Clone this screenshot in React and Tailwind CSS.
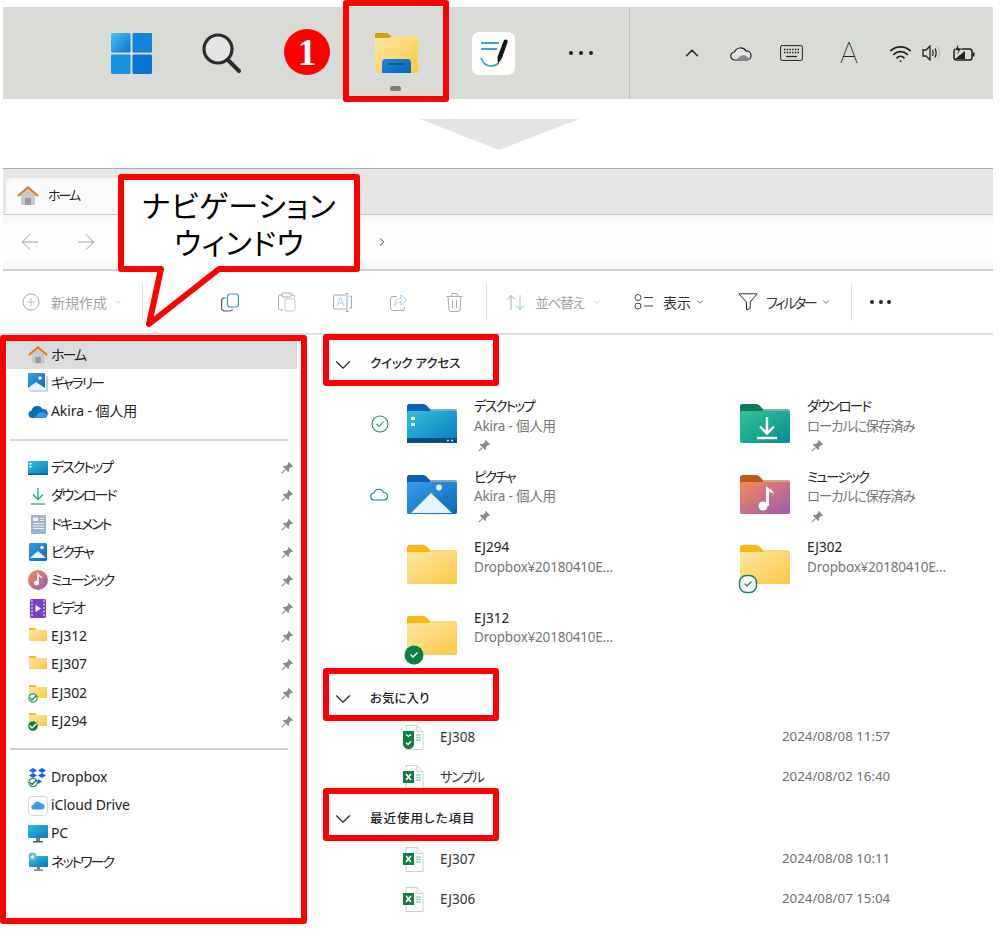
import { ArrowLeft, ArrowRight, ChevronDown, ChevronRight, ChevronUp, Wifi } from 'lucide-react';

const FONT = "font-['Noto_Sans','Noto_Sans_CJK_JP',sans-serif] [font-feature-settings:'palt']";

// katakana is set much tighter in the screenshot than in Noto
const isKana = (s) => /^[゠-ヿ]+$/.test(s);

// ---- shared little drawings ----
function Gradients() {
    const stops = [
        ['yellow', '#fde7a4', '#fcc845'],
        ['teal', '#31c3d8', '#0a78c0'],
        ['sky', '#3a9fe6', '#0a67b8'],
        ['green', '#2fc494', '#0a8c92'],
        ['music', '#f58a5a', '#9a5bb0'],
        ['win', '#4cc2f8', '#0a70cf'],
        ['pocket', '#1b8ae0', '#0b62b4'],
    ];
    return (
        <svg width="0" height="0" className="absolute">
            <defs>
                {stops.map(([id, a, b]) => (
                    <linearGradient key={id} id={id} x1="0" y1="0" x2="1" y2="1">
                        <stop offset="0" stopColor={a} />
                        <stop offset="1" stopColor={b} />
                    </linearGradient>
                ))}
            </defs>
        </svg>
    );
}

function Folder({ fill = 'yellow', tab = '#fbb714', edge, children }) {
    return (
        <svg width="50" height="39" viewBox="0 0 50 39" className="block">
            <path d="M2 0h14c2 0 3 1 4 2l3 3v6H0V2c0-1 1-2 2-2z" fill={tab} />
            <rect x="0" y="5" width="50" height="34" rx="2" fill={edge || tab} opacity={edge ? 1 : 0.55} />
            <rect x="0" y="7" width="50" height="32" rx="2" fill={`url(#${fill})`} />
            {children}
        </svg>
    );
}

function Pin({ className = 'text-[#868b92]' }) {
    return (
        <svg width="13" height="13" viewBox="0 0 13 13" className={className}>
            <path d="M7.6.8l4.6 4.6-1.2.6-.7-.2L8 8l.2 2.2-1 .9L1.900 5.800l.9-1L5 5l2.200-2.300-.2-.7z" fill="currentColor" />
            <path d="M4.300 8.700L.8 12.200" stroke="currentColor" strokeWidth="1.200" />
        </svg>
    );
}

function Check({ className }) {
    return <path d="M-3 0l2 2 4-4" fill="none" strokeWidth="1.400" strokeLinecap="round" strokeLinejoin="round" className={className} />;
}

// small folder for the tree on the left, with optional sync badge
function TreeFolder({ badge }) {
    return (
        <svg width="20" height="21" viewBox="0 0 20 21">
            <path d="M1 2h6l2 2h10v11H1z" fill="#fbb714" />
            <rect x="1" y="4" width="18" height="11" fill="url(#yellow)" />
            {badge === 'outline' && (
                <g transform="translate(5 15)">
                    <circle r="4.200" fill="#fff" stroke="#2f9c6a" strokeWidth="1.200" />
                    <Check className="stroke-[#1a8a55]" />
                </g>
            )}
            {badge === 'solid' && (
                <g transform="translate(5 15)">
                    <circle r="4.800" fill="#0c7f44" />
                    <Check className="stroke-white" />
                </g>
            )}
        </svg>
    );
}

function HomeIcon() {
    return (
        <svg width="22" height="20" viewBox="0 0 22 20">
            <path d="M4 9l7-6 7 6v10H4z" fill="#c9c9c9" />
            <rect x="8" y="12" width="6" height="7" fill="#9b9b9b" />
            <path d="M1 10l10-8.500L21 10" fill="none" stroke="#e0771c" strokeWidth="2.200" />
        </svg>
    );
}

const treeIcons = {
    home: <HomeIcon />,
    gallery: (
        <svg width="20" height="20" viewBox="0 0 20 20">
            <path d="M2 18h17V3" fill="none" stroke="#7fb3e3" strokeWidth="1.200" />
            <rect x="0" y="0" width="17" height="17" rx="1" fill="url(#sky)" />
            <circle cx="12" cy="5" r="1.800" fill="#fff" />
            <path d="M0 15l8-6 9 6v2H0z" fill="#eaf4fc" />
        </svg>
    ),
    cloud: (
        <svg width="20" height="14" viewBox="0 0 20 14">
            <path d="M4 14a3.800 3.800 0 01-.5-7.500A6 6 0 0114.500 5 4.500 4.500 0 0116 14z" fill="#0f6cbd" />
            <path d="M6 14l5-5c2-1.500 5-1.500 7 .5 2 2 1 4.500-2 4.500z" fill="#2f9be8" />
        </svg>
    ),
    desktop: (
        <svg width="20" height="14" viewBox="0 0 20 14">
            <rect width="20" height="14" rx="1" fill="url(#teal)" />
            <rect y="12.500" width="20" height="1.500" fill="#0a5a8c" />
            <rect x="1.500" y="2" width="2" height="1.500" fill="#fff" />
            <rect x="1.500" y="5" width="2" height="1.500" fill="#fff" />
        </svg>
    ),
    download: (
        <svg width="16" height="18" viewBox="0 0 16 18" fill="none" stroke="#1fa77f" strokeWidth="1.300">
            <path d="M8 1v11M3 7.500l5 5 5-5" />
            <path d="M1 17h14" />
        </svg>
    ),
    document: (
        <svg width="15" height="19" viewBox="0 0 15 19">
            <rect width="15" height="19" rx="1" fill="#9db4cf" />
            <rect x="2" y="2.500" width="5" height="3.500" fill="#e8eef5" />
            <path d="M9 3.500h4M9 5.500h4M2 8.500h11M2 11h11M2 13.500h11" stroke="#e8eef5" strokeWidth="1" />
        </svg>
    ),
    picture: (
        <svg width="18" height="18" viewBox="0 0 18 18">
            <rect width="18" height="18" rx="1.500" fill="url(#sky)" />
            <circle cx="13" cy="4.500" r="1.800" fill="#fff" />
            <path d="M1 15l8-7 8 7z" fill="#eaf4fc" />
        </svg>
    ),
    music: (
        <svg width="20" height="20" viewBox="0 0 20 20">
            <circle cx="10" cy="10" r="10" fill="url(#music)" />
            <circle cx="8.500" cy="13" r="2.500" fill="#fff" />
            <path d="M10 13V4.500c1 1.500 3 1.500 3.500 3.500" fill="none" stroke="#fff" strokeWidth="1.500" />
        </svg>
    ),
    video: (
        <svg width="16" height="19" viewBox="0 0 16 19">
            <rect width="16" height="19" rx="1.500" fill="#7a3fc4" />
            <path d="M1.200 2h1.500M1.200 5.500h1.500M1.200 9h1.500M1.200 12.500h1.500M1.200 16h1.500M13.300 2h1.500M13.300 5.500h1.500M13.300 9h1.500M13.300 12.500h1.500M13.300 16h1.500" stroke="#e6d7f7" strokeWidth="1.400" />
            <path d="M5.500 6l5.500 3.500L5.500 13z" fill="#fff" />
        </svg>
    ),
    dropbox: (
        <svg width="20" height="21" viewBox="0 0 20 21">
            <path d="M5 1l4 2.500L5 6 1 3.500zM14 1l4 2.500L14 6l-4-2.500zM5 6l4 2.500L5 11 1 8.500zM14 6l4 2.500L14 11l-4-2.500zM10 12l4 2.500-4 2.500-1-.5z" fill="#0f62fe" />
            <g transform="translate(5 15.500)">
                <circle r="4.200" fill="#fff" stroke="#2f9c6a" strokeWidth="1.200" />
                <Check className="stroke-[#1a8a55]" />
            </g>
        </svg>
    ),
    icloud: (
        <svg width="20" height="20" viewBox="0 0 20 20">
            <rect x=".5" y=".5" width="19" height="19" rx="4" fill="#fff" stroke="#d5d5d5" />
            <path d="M6 13.500a2.500 2.500 0 01-.3-5A4 4 0 0113 7.500a3 3 0 011 6z" fill="#3d9be9" />
        </svg>
    ),
    pc: (
        <svg width="20" height="20" viewBox="0 0 20 20">
            <rect y="1" width="20" height="13" rx=".8" fill="url(#teal)" />
            <rect x="8" y="14" width="4" height="3" fill="#6d7f8c" />
            <rect x="5" y="17" width="10" height="1.500" fill="#4f5e69" />
        </svg>
    ),
    network: (
        <svg width="20" height="20" viewBox="0 0 20 20">
            <rect x="1" y="4" width="19" height="11" rx=".8" fill="url(#teal)" />
            <rect x="9" y="15" width="3" height="2.500" fill="#6d7f8c" />
            <rect x="6" y="17.500" width="9" height="1.200" fill="#4f5e69" />
            <circle cx="4.500" cy="4.500" r="4" fill="#6fb5dc" />
            <path d="M2 5l4-2v4z" fill="#fff" />
        </svg>
    ),
    ej312: <TreeFolder />,
    ej302: <TreeFolder badge="outline" />,
    ej294: <TreeFolder badge="solid" />,
};

const treeTop = [
    ['home', 'ホーム'],
    ['gallery', 'ギャラリー'],
    ['cloud', 'Akira - 個人用'],
];
const treePinned = [
    ['desktop', 'デスクトップ'],
    ['download', 'ダウンロード'],
    ['document', 'ドキュメント'],
    ['picture', 'ピクチャ'],
    ['music', 'ミュージック'],
    ['video', 'ビデオ'],
    ['ej312', 'EJ312'],
    ['ej312', 'EJ307'],
    ['ej302', 'EJ302'],
    ['ej294', 'EJ294'],
];
const treeBottom = [
    ['dropbox', 'Dropbox'],
    ['icloud', 'iCloud Drive'],
    ['pc', 'PC'],
    ['network', 'ネットワーク'],
];

function TreeRow({ icon, label, pinned, active }) {
    return (
        <div className={`flex h-[28.2px] w-[290px] items-center ml-px ${active ? 'bg-[#dcdcdc]' : ''}`}>
            <div className="flex w-[20px] ml-[21px] justify-center">{treeIcons[icon]}</div>
            <span className={`ml-[3px] -mt-[2px] flex-1 text-[14px] text-[#222] ${isKana(label) ? 'tracking-[-2px]' : 'tracking-[-0.1px]'}`}>{label}</span>
            {pinned && (
                <span className="mr-[3px]">
                    <Pin />
                </span>
            )}
        </div>
    );
}

function Sidebar() {
    return (
        <aside className="h-[589px] w-[307px] shrink-0 rounded-[3px] border-[6px] border-[#ff0000] bg-white">
            {treeTop.map(([icon, label], i) => (
                <TreeRow key={label} icon={icon} label={label} active={i === 0} />
            ))}
            <div className="flex h-[28px] items-center pl-[4px]">
                <div className="h-[2px] w-[278px] bg-[#d8d8d8]" />
            </div>
            {treePinned.map(([icon, label]) => (
                <TreeRow key={label} icon={icon} label={label} pinned />
            ))}
            <div className="flex h-[28px] items-center pl-[4px]">
                <div className="h-[2px] w-[278px] bg-[#d0d0d0]" />
            </div>
            {treeBottom.map(([icon, label]) => (
                <TreeRow key={label} icon={icon} label={label} />
            ))}
        </aside>
    );
}

// ---- main pane ----
function SectionHeader({ title, className = '', textClass = '' }) {
    return (
        <div className={`relative z-10 flex w-[176px] items-center rounded-[3px] border-[6px] border-[#ff0000] bg-white pl-px pt-[9px] ${className}`}>
            <ChevronDown size={26} strokeWidth={1} className="text-[#222]" />
            <span className={`ml-[14px] text-[12.5px] font-medium text-[#222] ${textClass}`}>{title}</span>
        </div>
    );
}

const folderArt = {
    desktop: (
        <g>
            <rect x="0" y="34" width="50" height="5" fill="#0b4f80" />
            <rect x="4" y="13" width="4" height="3" fill="#fff" />
            <rect x="4" y="19" width="4" height="3" fill="#fff" />
            <path d="M40 36.500h2M44 36.500h2" stroke="#cfe8f5" strokeWidth="1.500" />
        </g>
    ),
    pictures: (
        <g>
            <circle cx="32" cy="12.500" r="3" fill="#e9f3fb" />
            <path d="M4 38L24 18l21 20z" fill="#e9f3fb" />
        </g>
    ),
    downloads: (
        <g fill="none" stroke="#fff" strokeWidth="2.400">
            <path d="M27 13v16M20 22.500l7 7 7-7" />
            <path d="M17 34h20" />
        </g>
    ),
    music: (
        <g>
            <circle cx="23" cy="31" r="4.500" fill="#fff" />
            <path d="M26 31V11c2 3 7 3 8 8-3-2-5-2-5-2v14z" fill="#fff" />
        </g>
    ),
};

const tiles = [
    { name: 'デスクトップ', sub: 'Akira - 個人用', pin: true, status: 'check', folder: { fill: 'teal', tab: '#0a62b5' }, art: 'desktop' },
    { name: 'ダウンロード', sub: 'ローカルに保存済み', pin: true, local: true, folder: { fill: 'green', tab: '#0b7a5e' }, art: 'downloads' },
    { name: 'ピクチャ', sub: 'Akira - 個人用', pin: true, status: 'cloud', folder: { fill: 'sky', tab: '#0a5fb0' }, art: 'pictures' },
    { name: 'ミュージック', sub: 'ローカルに保存済み', pin: true, local: true, folder: { fill: 'music', tab: '#bb5a1d' }, art: 'music' },
    { name: 'EJ294', sub: 'Dropbox¥20180410E...', folder: {} },
    { name: 'EJ302', sub: 'Dropbox¥20180410E...', folder: {}, badge: 'outline' },
    { name: 'EJ312', sub: 'Dropbox¥20180410E...', folder: {}, badge: 'solid' },
];

function Tile({ tile }) {
    return (
        <div className="flex pt-[18px]">
            <div className="flex h-[40px] w-[84px] items-center justify-end pr-[18px]">
                {tile.status === 'check' && (
                    <svg width="18" height="18" viewBox="0 0 18 18" fill="none" stroke="#2a8f4e" strokeWidth="1.100">
                        <circle cx="9" cy="9" r="8" />
                        <path d="M5.500 9l2.500 2.500 4.500-5" />
                    </svg>
                )}
                {tile.status === 'cloud' && (
                    <svg width="19" height="13" viewBox="0 0 19 13" fill="none" stroke="#1173c4" strokeWidth="1.100">
                        <path d="M4.500 12a3.500 3.500 0 01-.5-7A5 5 0 0113.500 4.500 3.800 3.800 0 0114.500 12z" />
                    </svg>
                )}
            </div>
            <div className="relative h-[39px] w-[50px]">
                <Folder {...tile.folder}>{tile.art && folderArt[tile.art]}</Folder>
                {tile.badge === 'outline' && (
                    <svg width="20" height="20" viewBox="-10 -10 20 20" className="absolute -bottom-[10px] left-[-2px]">
                        <rect x="-8.500" y="-8.500" width="17" height="17" rx="7" fill="#fff" stroke="#0f8a55" strokeWidth="1.500" />
                        <Check className="stroke-[#0f8a55]" />
                    </svg>
                )}
                {tile.badge === 'solid' && (
                    <svg width="20" height="20" viewBox="-10 -10 20 20" className="absolute -bottom-[10px] left-[-3px]">
                        <circle r="9.500" fill="#0c7f44" />
                        <Check className="stroke-white" />
                    </svg>
                )}
            </div>
            <div className="ml-[17px] -mt-[7px] text-[13.5px] leading-[19.500px]">
                <div className={`text-[#222] ${isKana(tile.name) ? 'tracking-[-1.7px]' : ''}`}>{tile.name}</div>
                <div className={`text-[#767676] ${tile.local ? 'tracking-[-1.2px]' : 'tracking-[-0.2px]'}`}>{tile.sub}</div>
                {tile.pin && (
                    <div className="flex h-[19.500px] items-center pl-[4px]">
                        <Pin className="text-[#8a8a8a]" />
                    </div>
                )}
            </div>
        </div>
    );
}

function ExcelIcon({ shield }) {
    return (
        <svg width="21" height="25" viewBox="0 0 21 25">
            <path d="M3 .5h11l6 6v18H3z" fill="#fff" stroke="#cfcfcf" />
            <path d="M14 .5v6h6" fill="none" stroke="#cfcfcf" />
            <path d="M13 10h5M13 12.500h5M13 15h5" stroke="#9cd3b4" strokeWidth="1.500" />
            {shield ? (
                <g>
                    <path d="M0 6h11v13c0 3-3 5-5.500 5S0 22 0 19z" fill="#107c41" />
                    <path d="M3 9.500l2.500 2 2.500-2M3 17.500l2 2 3-3" fill="none" stroke="#fff" strokeWidth="1.300" />
                </g>
            ) : (
                <g>
                    <rect x="0" y="6" width="11" height="12" fill="#107c41" />
                    <path d="M3 9l5 6M8 9l-5 6" stroke="#fff" strokeWidth="1.600" />
                </g>
            )}
        </svg>
    );
}

function FileRow({ name, date, shield }) {
    return (
        <div className="flex h-[40px] items-center pl-[80px]">
            <ExcelIcon shield={shield} />
            <span className={`ml-[16px] w-[342px] text-[13.5px] text-[#333] ${isKana(name) ? 'tracking-[-1.500px]' : ''}`}>{name}</span>
            <span className="text-[13.3px] text-[#6e6e6e]">{date}</span>
        </div>
    );
}

function MainPane() {
    return (
        <main className="ml-[16px] flex-1 -mt-px">
            <SectionHeader title="クイック アクセス" className="h-[52px]" textClass="-tracking-[0.2px]" />
            <div className="grid h-[282px] grid-cols-[333px_1fr] auto-rows-[70.500px]">
                {tiles.map((t) => (
                    <Tile key={t.name} tile={t} />
                ))}
            </div>
            <SectionHeader title="お気に入り" className="h-[53px]" />
            <div className="flex h-[67px] flex-col">
                <div className="-mt-[4px]">
                    <FileRow name="EJ308" date="2024/08/08 11:57" shield />
                    <FileRow name="サンプル" date="2024/08/02 16:40" />
                </div>
            </div>
            <SectionHeader title="最近使用した項目" className="h-[53px]" textClass="tracking-[1px]" />
            <div className="flex flex-col">
                <div className="-mt-[2px]">
                    <FileRow name="EJ307" date="2024/08/08 10:11" />
                    <FileRow name="EJ306" date="2024/08/07 15:04" />
                </div>
            </div>
        </main>
    );
}

// ---- taskbar ----
function Taskbar() {
    return (
        <div className="relative ml-[3px] mt-[7px] flex h-[92px] w-[990px] items-center bg-[#d9dbd7]">
            {/* windows logo */}
            <svg width="41" height="41" viewBox="0 0 41 41" className="ml-[108px]">
                <rect width="19.500" height="19.500" rx="1.500" fill="url(#win)" />
                <rect x="21.500" width="19.500" height="19.500" rx="1" fill="#1284dc" />
                <rect y="21.500" width="19.500" height="19.500" rx="1" fill="#1a92e4" />
                <rect x="21.500" y="21.500" width="19.500" height="19.500" rx="1.500" fill="#0a74d2" />
            </svg>
            {/* search */}
            <svg width="40" height="41" viewBox="0 0 40 41" fill="none" stroke="#2b2b2b" className="ml-[50px]">
                <circle cx="16" cy="16" r="14" strokeWidth="3.200" fill="#e4e5e3" />
                <path d="M26 27l11 11" strokeWidth="4" strokeLinecap="round" />
            </svg>
            {/* explorer */}
            <div className="relative ml-[133px] h-[40px] w-[43px]">
                <svg width="43" height="40" viewBox="0 0 43 40">
                    <path d="M1 0h11l4 3h27v5H0V1z" fill="#d29f14" />
                    <path d="M0 5h14l3-2h26v37H0z" fill="url(#yellow)" />
                    <path d="M7 40V30c0-2 1-4 3-4h23c2 0 3 2 3 4v10z" fill="url(#pocket)" />
                    <path d="M13 31h17" stroke="#0b4a86" strokeWidth="1.500" />
                </svg>
                <div className="absolute left-[15px] top-[53px] h-[5px] w-[11px] rounded-full bg-[#7d7d7d]" />
            </div>
            {/* notes app */}
            <div className="ml-[54px] h-[43px] w-[43px] rounded-[7px] bg-white">
                <svg width="43" height="43" viewBox="0 0 43 43" fill="none">
                    <path d="M9 11h18M9 17h16" stroke="#35a9c6" strokeWidth="1.800" />
                    <path d="M9 26c3 8 11 11 18 5" stroke="#35a9c6" strokeWidth="1.800" />
                    <path d="M32 8c2-1.500 4.500 0 3.500 2.500L30 26l-4 6-.5-7z" fill="#161616" />
                </svg>
            </div>
            {/* more */}
            <div className="ml-[54px] flex gap-[6px]">
                <span className="h-[4px] w-[4px] rounded-full bg-[#222]" />
                <span className="h-[4px] w-[4px] rounded-full bg-[#222]" />
                <span className="h-[4px] w-[4px] rounded-full bg-[#222]" />
            </div>
            <div className="ml-[36px] h-full w-px bg-[#bfc1bd]" />
            <ChevronUp size={22} strokeWidth={1.700} className="ml-[51px] text-[#222]" />
            {/* tray */}
            <svg width="22" height="15" viewBox="0 0 22 15" className="ml-[27px]">
                <path d="M5 14a4 4 0 01-.5-8A6.500 6.500 0 0116 5a4.500 4.500 0 011 9z" fill="#e4e5e3" stroke="#222" strokeWidth="1.200" />
                <path d="M5.500 14l5-4c2-1 4-1 6 0l4 4z" fill="#8a8a8a" />
            </svg>
            <svg width="23" height="16" viewBox="0 0 23 16" fill="none" stroke="#222" className="ml-[28px]">
                <rect x=".6" y=".6" width="21.800" height="14.800" rx="1.500" strokeWidth="1" />
                <path d="M4 4.500h15M4 7.500h15" strokeWidth="1.300" strokeDasharray="1.500 1.200" />
                <path d="M6 11.500h11" strokeWidth="1.300" />
            </svg>
            <span className="ml-[36px] w-[20px] text-center font-['Roboto',sans-serif] text-[30px] font-thin leading-none text-[#222]">A</span>
            <Wifi size={23} strokeWidth={1.900} className="ml-[30px] text-[#222]" />
            <svg width="20" height="16" viewBox="0 0 20 16" fill="none" stroke="#222" strokeWidth="1.300" className="ml-[10px]">
                <path d="M1 5h3l4-4v14l-4-4H1z" />
                <path d="M10.500 5c1 2 1 4 0 6M13 3.500c1.500 3 1.500 6 0 9" />
                <path d="M15.500 1.500c2.500 4 2.500 9 0 13" stroke="#b0b0b0" strokeWidth="1" />
            </svg>
            <svg width="22" height="18" viewBox="0 0 22 18" className="ml-[11px]">
                <rect x="1" y="5" width="18" height="11" rx="2.500" fill="none" stroke="#222" strokeWidth="1.500" />
                <rect x="19.500" y="8.500" width="2" height="4" fill="#222" />
                <path d="M2 15l10-8v8z" fill="#222" />
                <path d="M5 0L2 6.500h3l-1 5 4.500-7.500H5.500z" fill="#222" stroke="#d9dbd7" strokeWidth=".6" />
            </svg>

            {/* red frame around explorer */}
            <div className="absolute left-[340px] -top-[7px] h-[102px] w-[106px] rounded-[3px] border-[6px] border-[#ff0000]" />
            {/* number badge */}
            <div className="absolute left-[281px] top-[22px] flex h-[46px] w-[46px] items-center justify-center rounded-full bg-[#ff0000]">
                <span className="font-['Liberation_Serif',serif] text-[38px] font-bold leading-none text-white">1</span>
            </div>
        </div>
    );
}

// ---- explorer chrome ----
function Caret({ className = 'text-[#9a9a9a]' }) {
    return <ChevronDown size={10} strokeWidth={1.400} className={className} />;
}

function Toolbar() {
    const grey = '#a9a9a9';
    const blue = '#a9cdea';
    return (
        <div className="flex h-[64px] items-center whitespace-nowrap border-b-2 border-[#dedede] text-[14px]">
            <svg width="18" height="18" viewBox="0 0 18 18" fill="none" className="ml-[19px]">
                <circle cx="9" cy="9" r="8" stroke={grey} />
                <path d="M9 5v8M5 9h8" stroke={blue} strokeWidth="1.200" />
            </svg>
            <span className="ml-[11px] w-[56px] text-[#a3a3a3]">新規作成</span>
            <Caret className="ml-[6px] text-[#b0b0b0]" />
            <div className="ml-[19px] h-[38px] w-px bg-[#e2e2e2]" />
            <div className="w-[78px]" />
            {/* copy */}
            <svg width="18" height="19" viewBox="0 0 18 19" fill="none">
                <rect x="6.500" y="1" width="11" height="13" rx="2.500" stroke="#3a8fd0" strokeWidth="1.200" />
                <path d="M4.500 5H3a2.500 2.500 0 00-2.400 2.500v7A3 3 0 003.500 18H9a2.500 2.500 0 002.500-2" stroke="#555" strokeWidth="1.200" />
            </svg>
            {/* paste */}
            <svg width="18" height="20" viewBox="0 0 18 20" fill="none" className="ml-[39px]">
                <path d="M4 3H2a1.500 1.500 0 00-1.500 1.500v12A1.500 1.500 0 002 18h3M13 3h2a1.500 1.500 0 011.500 1.500V6" stroke={grey} />
                <rect x="4" y="1" width="9" height="4" rx="1" stroke={grey} />
                <rect x="7" y="7" width="10" height="12" rx="1.500" stroke={blue} />
            </svg>
            {/* rename */}
            <svg width="20" height="19" viewBox="0 0 20 19" fill="none" className="ml-[37px]">
                <path d="M13 2H2a1.500 1.500 0 00-1.500 1.500v11A1.500 1.500 0 002 16h11" stroke={grey} />
                <path d="M4 13l3.500-9 3.500 9M5.200 10h4.600" stroke={blue} />
                <path d="M14 .5v18M12.500.5h3M12.500 18.500h3" stroke={grey} />
                <path d="M16 3h2.500V15H16" stroke={grey} />
            </svg>
            {/* share */}
            <svg width="18" height="17" viewBox="0 0 18 17" fill="none" className="ml-[37px]">
                <path d="M7 2.500H3A2.500 2.500 0 00.500 5v9A2.500 2.500 0 003 16.500h9a2.500 2.500 0 002.500-2.500v-1" stroke={grey} />
                <path d="M11 1l6 5-6 5V8C8 8 6 9 4.500 12 4.500 7.500 7 4.500 11 4z" stroke={blue} />
            </svg>
            {/* delete */}
            <svg width="17" height="19" viewBox="0 0 17 19" fill="none" stroke={grey} className="ml-[38px]">
                <path d="M.5 3.500h16M5.500 3.500V2A1.500 1.500 0 017 .5h3A1.500 1.500 0 0111.500 2v1.500" />
                <path d="M2 3.500l1 13.500a1.500 1.500 0 001.500 1.500h8A1.500 1.500 0 0014 17l1-13.500M6.500 7v8M10.500 7v8" />
            </svg>
            <div className="ml-[23px] h-[38px] w-px bg-[#e2e2e2]" />
            {/* sort */}
            <svg width="20" height="17" viewBox="0 0 20 17" fill="none" className="ml-[19px]">
                <path d="M5 16V1.500M1 5.500l4-4 4 4" stroke={grey} />
                <path d="M14 1v14.500M10 11.500l4 4 4-4" stroke="#8fc0e6" />
            </svg>
            <span className="ml-[9px] w-[50px] tracking-[-1.700px] text-[#a3a3a3]">並べ替え</span>
            <Caret className="ml-[7px] text-[#b0b0b0]" />
            {/* view */}
            <svg width="19" height="16" viewBox="0 0 19 16" fill="none" stroke="#444" className="ml-[32px]">
                <circle cx="4" cy="3.500" r="3" />
                <circle cx="4" cy="12" r="3" />
                <path d="M10 3.500h9M10 12h9" strokeWidth="1.200" />
            </svg>
            <span className="ml-[10px] w-[28px] text-[#333]">表示</span>
            <Caret className="ml-[4px]" />
            {/* filter */}
            <svg width="20" height="18" viewBox="0 0 20 18" fill="none" stroke="#333" className="ml-[33px]">
                <path d="M.8.800h18.400l-7 8.200v6.500L8.500 17V9z" />
            </svg>
            <span className="ml-[8px] w-[50px] tracking-[-2.400px] text-[#333]">フィルター</span>
            <Caret className="ml-[5px]" />
            <div className="ml-[20px] h-[38px] w-px bg-[#e2e2e2]" />
            <div className="ml-[18px] flex gap-[4.500px]">
                <span className="h-[4px] w-[4px] rounded-full bg-[#222]" />
                <span className="h-[4px] w-[4px] rounded-full bg-[#222]" />
                <span className="h-[4px] w-[4px] rounded-full bg-[#222]" />
            </div>
        </div>
    );
}

function ExplorerChrome() {
    return (
        <div className="ml-[3px] w-[990px]">
            <div className="flex h-[47px] items-end border-t border-[#a8acb5] border-b border-b-[#c9c9c9] bg-[#e6e6e6]">
                <div className="flex h-[36px] w-[300px] items-center rounded-t-[6px] bg-[#fafafa] pl-[11px] ml-[3px]">
                    <HomeIcon />
                    <span className="ml-[9px] text-[13px] tracking-[-2px] text-[#222]">ホーム</span>
                </div>
            </div>
            <div className="flex h-[56px] flex-col justify-center border-b-2 border-[#cfcfcf] bg-[#f8f8f8]">
                <div className="flex h-[38px] items-center bg-[#fefefe]">
                    <ArrowLeft size={26} strokeWidth={0.9} className="ml-[13.500px] text-[#999]" />
                    <ArrowRight size={26} strokeWidth={0.9} className="ml-[30px] text-[#999]" />
                    <ChevronRight size={14} strokeWidth={1.500} className="ml-[276px] text-[#222]" />
                </div>
            </div>
            <Toolbar />
        </div>
    );
}

export default function App() {
    return (
        <div className={`relative h-[930px] w-[1000px] overflow-hidden bg-white ${FONT}`}>
            <Gradients />
            <Taskbar />

            <div className="h-[69px] pl-[420px] pt-[20px]">
                <svg width="159" height="31" viewBox="0 0 159 31" className="block">
                    <path d="M0 0h159L79 31z" fill="#e4e4e4" />
                </svg>
            </div>

            <ExplorerChrome />

            <div className="flex">
                <Sidebar />
                <MainPane />
            </div>

            {/* callout over the chrome */}
            <div className="absolute left-[118px] top-[174px] h-[158px] w-[242px]">
                <svg width="242" height="158" viewBox="0 0 242 158" className="absolute inset-0">
                    <path d="M3 3H239V95H101L31 150L43 95H3Z" fill="#fff" stroke="#ff0000" strokeWidth="6" strokeLinejoin="round" />
                </svg>
                <div className="relative pt-[13px] text-center text-[30px] leading-[37px] tracking-[0.5px] text-black">
                    <div>ナビゲーション</div>
                    <div>ウィンドウ</div>
                </div>
            </div>
        </div>
    );
}
